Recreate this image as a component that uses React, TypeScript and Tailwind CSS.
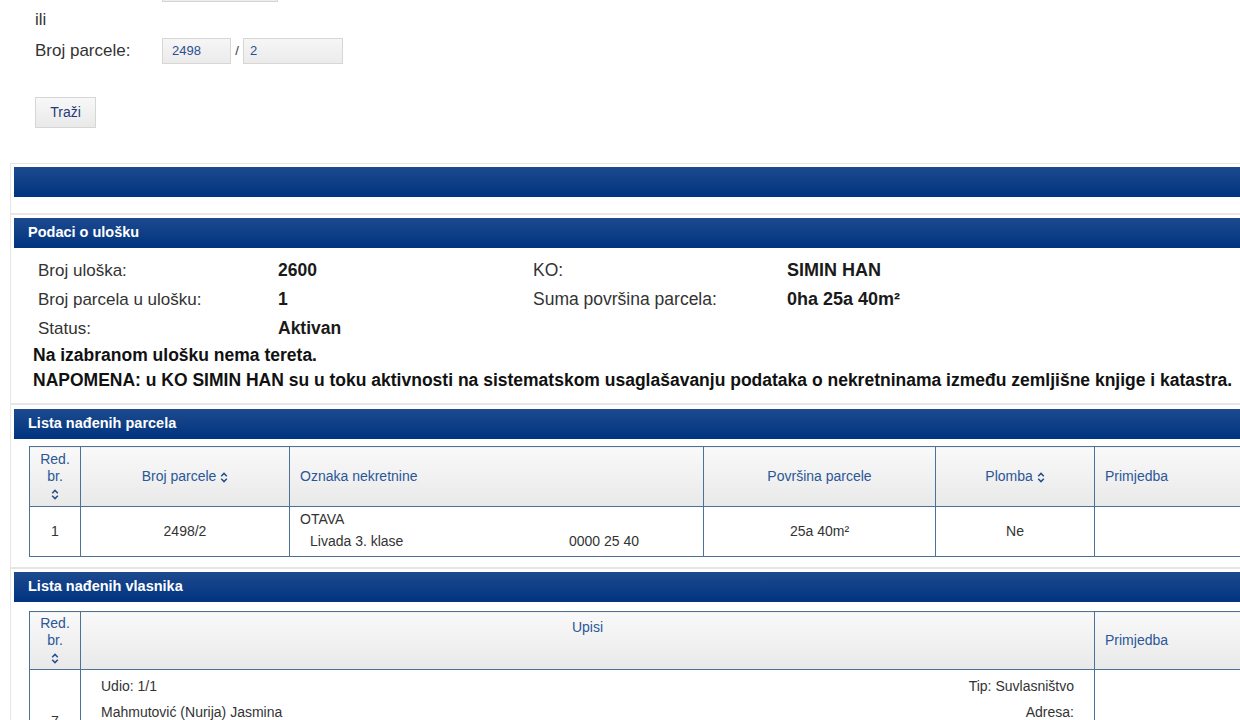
import React from "react";

const FONT = { fontFamily: '"Liberation Sans", Arial, sans-serif' };

function SortIcon() {
  return (
    <svg width="8" height="11" viewBox="0 0 8 11" className="inline-block align-middle">
      <path d="M1.2 4.2 L4 1.4 L6.8 4.2 M1.2 6.8 L4 9.6 L6.8 6.8" fill="none" stroke="#244f8c" strokeWidth="1.5" />
    </svg>
  );
}

function Bar({ title }: { title?: string }) {
  return (
    <div className="h-[30px] flex items-center pl-[14px] bg-gradient-to-b from-[#1d4a8e] to-[#003380] text-white text-[14.5px] font-bold">
      {title}
    </div>
  );
}

const th = "border border-[#4d7298] bg-gradient-to-b from-[#f9f9f9] to-[#e9e9e9] text-[#2b5797] font-normal text-[14px]";
const td = "border border-[#4d7298] text-[#333] text-[14px]";

function InfoRow({ l1, v1, l2, v2 }: { l1: string; v1: string; l2?: string; v2?: string }) {
  return (
    <div className="flex h-[29px] items-center text-[17px]">
      <div className="w-[264px] pl-[24px] text-[#333]">{l1}</div>
      <div className="w-[255px] font-bold text-[17.5px] text-[#1a1a1a]">{v1}</div>
      <div className="w-[254px] text-[#333] text-[17.5px]">{l2}</div>
      <div className="font-bold text-[18px] text-[#1a1a1a]">{v2}</div>
    </div>
  );
}

export default function App() {
  return (
    <div className="w-[1240px] h-[720px] overflow-hidden bg-white" style={FONT}>
      <div className="w-[1300px]">
        {/* search form, scrolled */}
        <div className="ml-[162px] w-[116px] h-[2px] border-x border-b border-[#d4d4d4] bg-[#eeeeee]" />
        <div className="pl-[35px] mt-[9px] text-[17px] text-[#333] leading-[18px]">ili</div>
        <div className="flex items-center mt-[9px] h-[26px]">
          <div className="w-[162px] pl-[35px] text-[17px] text-[#333]">Broj parcele:</div>
          <div className="w-[69px] h-[26px] border border-[#d6d6d6] bg-gradient-to-b from-[#f6f6f6] to-[#ebebeb] text-[13px] text-[#2a4f8f] pl-[9px] flex items-center">2498</div>
          <div className="w-[12px] text-center text-[13px] text-[#333]">/</div>
          <div className="w-[100px] h-[26px] border border-[#d6d6d6] bg-gradient-to-b from-[#f6f6f6] to-[#ebebeb] text-[13px] text-[#2a4f8f] pl-[6px] flex items-center">2</div>
        </div>
        <div className="ml-[35px] mt-[33px] w-[61px] h-[31px] border border-[#d6d6d6] bg-gradient-to-b from-[#f8f8f8] to-[#e9e9e9] text-[14px] text-[#1f3c7a] flex items-center justify-center">
          Traži
        </div>

        {/* section 1 */}
        <div className="ml-[10px] mt-[35px] border border-[#e6e6e6] pt-[3px] pl-[3px] pb-[16px]">
          <Bar />
        </div>

        {/* section 2 */}
        <div className="ml-[10px] border border-[#e6e6e6] pt-[3px] pl-[3px] pb-[10px]">
          <Bar title="Podaci o ulošku" />
          <div className="mt-[8px]">
            <InfoRow l1="Broj uloška:" v1="2600" l2="KO:" v2="SIMIN HAN" />
            <InfoRow l1="Broj parcela u ulošku:" v1="1" l2="Suma površina parcela:" v2="0ha 25a 40m²" />
            <InfoRow l1="Status:" v1="Aktivan" />
          </div>
          <div className="pl-[19px] text-[17.5px] font-bold text-[#111]">
            <div className="h-[24px] flex items-center">Na izabranom ulošku nema tereta.</div>
            <div className="h-[26px] flex items-center whitespace-nowrap">
              NAPOMENA: u KO SIMIN HAN su u toku aktivnosti na sistematskom usaglašavanju podataka o nekretninama između zemljišne knjige i katastra.
            </div>
          </div>
        </div>

        {/* section 3 */}
        <div className="ml-[10px] border border-[#e6e6e6] pt-[4px] pl-[3px] pb-[10px]">
          <Bar title="Lista nađenih parcela" />
          <table className="ml-[15px] mt-[7px] table-fixed border-collapse w-[1272px]">
            <colgroup>
              <col className="w-[51px]" />
              <col className="w-[209px]" />
              <col className="w-[414px]" />
              <col className="w-[232px]" />
              <col className="w-[159px]" />
              <col className="w-[207px]" />
            </colgroup>
            <thead>
              <tr className="h-[60px]">
                <th className={`${th} text-center leading-[17px]`}>
                  Red.<br />br.<br /><SortIcon />
                </th>
                <th className={`${th} text-center`}>Broj parcele <SortIcon /></th>
                <th className={`${th} text-left pl-[10px]`}>Oznaka nekretnine</th>
                <th className={`${th} text-center`}>Površina parcele</th>
                <th className={`${th} text-center`}>Plomba <SortIcon /></th>
                <th className={`${th} text-left pl-[10px]`}>Primjedba</th>
              </tr>
            </thead>
            <tbody>
              <tr className="h-[50px]">
                <td className={`${td} text-center`}>1</td>
                <td className={`${td} text-center`}>2498/2</td>
                <td className={`${td} pl-[10px] align-top pt-[4px] leading-[16px]`}>
                  <div>OTAVA</div>
                  <div className="flex mt-[6px] pl-[10px]">
                    <span className="w-[259px]">Livada 3. klase</span>
                    <span>0000 25 40</span>
                  </div>
                </td>
                <td className={`${td} text-center`}>25a 40m²</td>
                <td className={`${td} text-center`}>Ne</td>
                <td className={td}></td>
              </tr>
            </tbody>
          </table>
        </div>

        {/* section 4 */}
        <div className="ml-[10px] border border-[#e6e6e6] pt-[3px] pl-[3px] pb-[10px]">
          <Bar title="Lista nađenih vlasnika" />
          <table className="ml-[15px] mt-[9px] table-fixed border-collapse w-[1272px]">
            <colgroup>
              <col className="w-[51px]" />
              <col className="w-[1014px]" />
              <col className="w-[207px]" />
            </colgroup>
            <thead>
              <tr className="h-[58px]">
                <th className={`${th} text-center leading-[17px]`}>
                  Red.<br />br.<br /><SortIcon />
                </th>
                <th className={`${th} text-center align-top pt-[5px]`}>Upisi</th>
                <th className={`${th} text-left pl-[10px]`}>Primjedba</th>
              </tr>
            </thead>
            <tbody>
              <tr className="h-[104px]">
                <td className={`${td} text-center`}>7</td>
                <td className={`${td} align-top pt-[7px] px-[20px] leading-[18px]`}>
                  <div className="flex justify-between">
                    <span>Udio: 1/1</span>
                    <span>Tip: Suvlasništvo</span>
                  </div>
                  <div className="flex justify-between mt-[8px]">
                    <span>Mahmutović (Nurija) Jasmina</span>
                    <span>Adresa:</span>
                  </div>
                </td>
                <td className={td}></td>
              </tr>
            </tbody>
          </table>
        </div>
      </div>
    </div>
  );
}
